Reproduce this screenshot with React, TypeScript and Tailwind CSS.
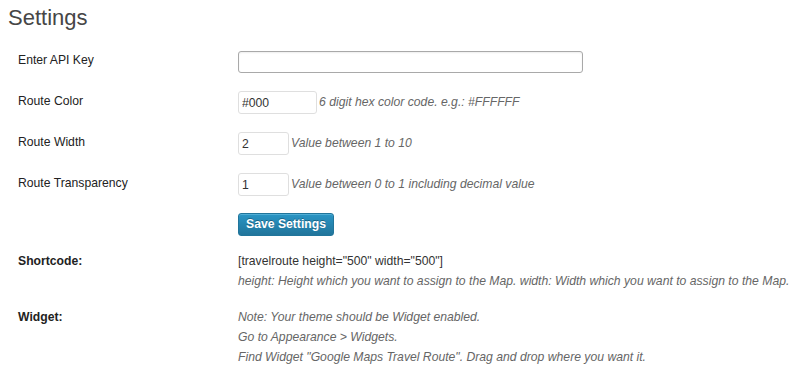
import React from "react";

/* ── settings rows ─────────────────────────────────────────────────────────── */
type Field = {
  label: string;
  value: string;
  width: string;
  hint: string;
};

const fields: Field[] = [
  { label: "Route Color", value: "#000", width: "w-[79px]", hint: "6 digit hex color code. e.g.: #FFFFFF" },
  { label: "Route Width", value: "2", width: "w-[51px]", hint: "Value between 1 to 10" },
  { label: "Route Transparency", value: "1", width: "w-[51px]", hint: "Value between 0 to 1 including decimal value" },
];

export default function App() {
  return (
    <div className="min-h-screen bg-white pl-[8px] text-[12.2px] text-[#222] font-['Liberation_Sans',Arial,sans-serif]">
      <h2 className="pt-[3px] text-[22px] leading-[29px] text-[#464646] font-normal">Settings</h2>

      <div className="pt-[9px]">
        {/* API key */}
        <div className="flex h-[41px] items-center">
          <div className="w-[230px] pl-[10px] pb-[2px]">Enter API Key</div>
          <input
            type="text"
            defaultValue=""
            className="h-[22px] w-[345px] rounded-[3px] border border-[#a9a9a9] bg-white px-[3px] text-[12.2px] text-[#333] shadow-[inset_0_1px_2px_rgba(0,0,0,0.07)] outline-none"
          />
        </div>

        {fields.map((f) => (
          <div key={f.label} className="flex h-[41px] items-center">
            <div className="w-[230px] pl-[10px] pb-[2px]">{f.label}</div>
            <input
              type="text"
              defaultValue={f.value}
              className={`h-[23px] ${f.width} rounded-[3px] border border-[#dfdfdf] bg-white px-[3px] text-[12.2px] text-[#333] outline-none`}
            />
            <span className="ml-[2px] italic text-[#666]">{f.hint}</span>
          </div>
        ))}

        {/* save */}
        <div className="flex pt-[8px] pb-[15px]">
          <div className="w-[230px]" />
          <button className="h-[23px] w-[96px] rounded-[3px] border border-[#21759b] bg-gradient-to-b from-[#2a95c5] to-[#21759b] text-[12.2px] font-bold text-white shadow-[inset_0_1px_0_rgba(120,200,230,0.5)] [text-shadow:0_-1px_0_rgba(0,0,0,0.3)]">
            Save Settings
          </button>
        </div>

        {/* shortcode */}
        <div className="flex leading-[20px]">
          <div className="w-[230px] pl-[10px] font-bold">Shortcode:</div>
          <div>
            <div className="text-[#333]">[travelroute height="500" width="500"]</div>
            <div className="italic text-[#666]">
              height: Height which you want to assign to the Map. width: Width which you want to assign to the Map.
            </div>
          </div>
        </div>

        {/* widget */}
        <div className="mt-[16px] flex leading-[20px]">
          <div className="w-[230px] pl-[10px] font-bold">Widget:</div>
          <div className="italic text-[#666]">
            <div>Note: Your theme should be Widget enabled.</div>
            <div>Go to Appearance &gt; Widgets.</div>
            <div>Find Widget "Google Maps Travel Route". Drag and drop where you want it.</div>
          </div>
        </div>
      </div>
    </div>
  );
}
